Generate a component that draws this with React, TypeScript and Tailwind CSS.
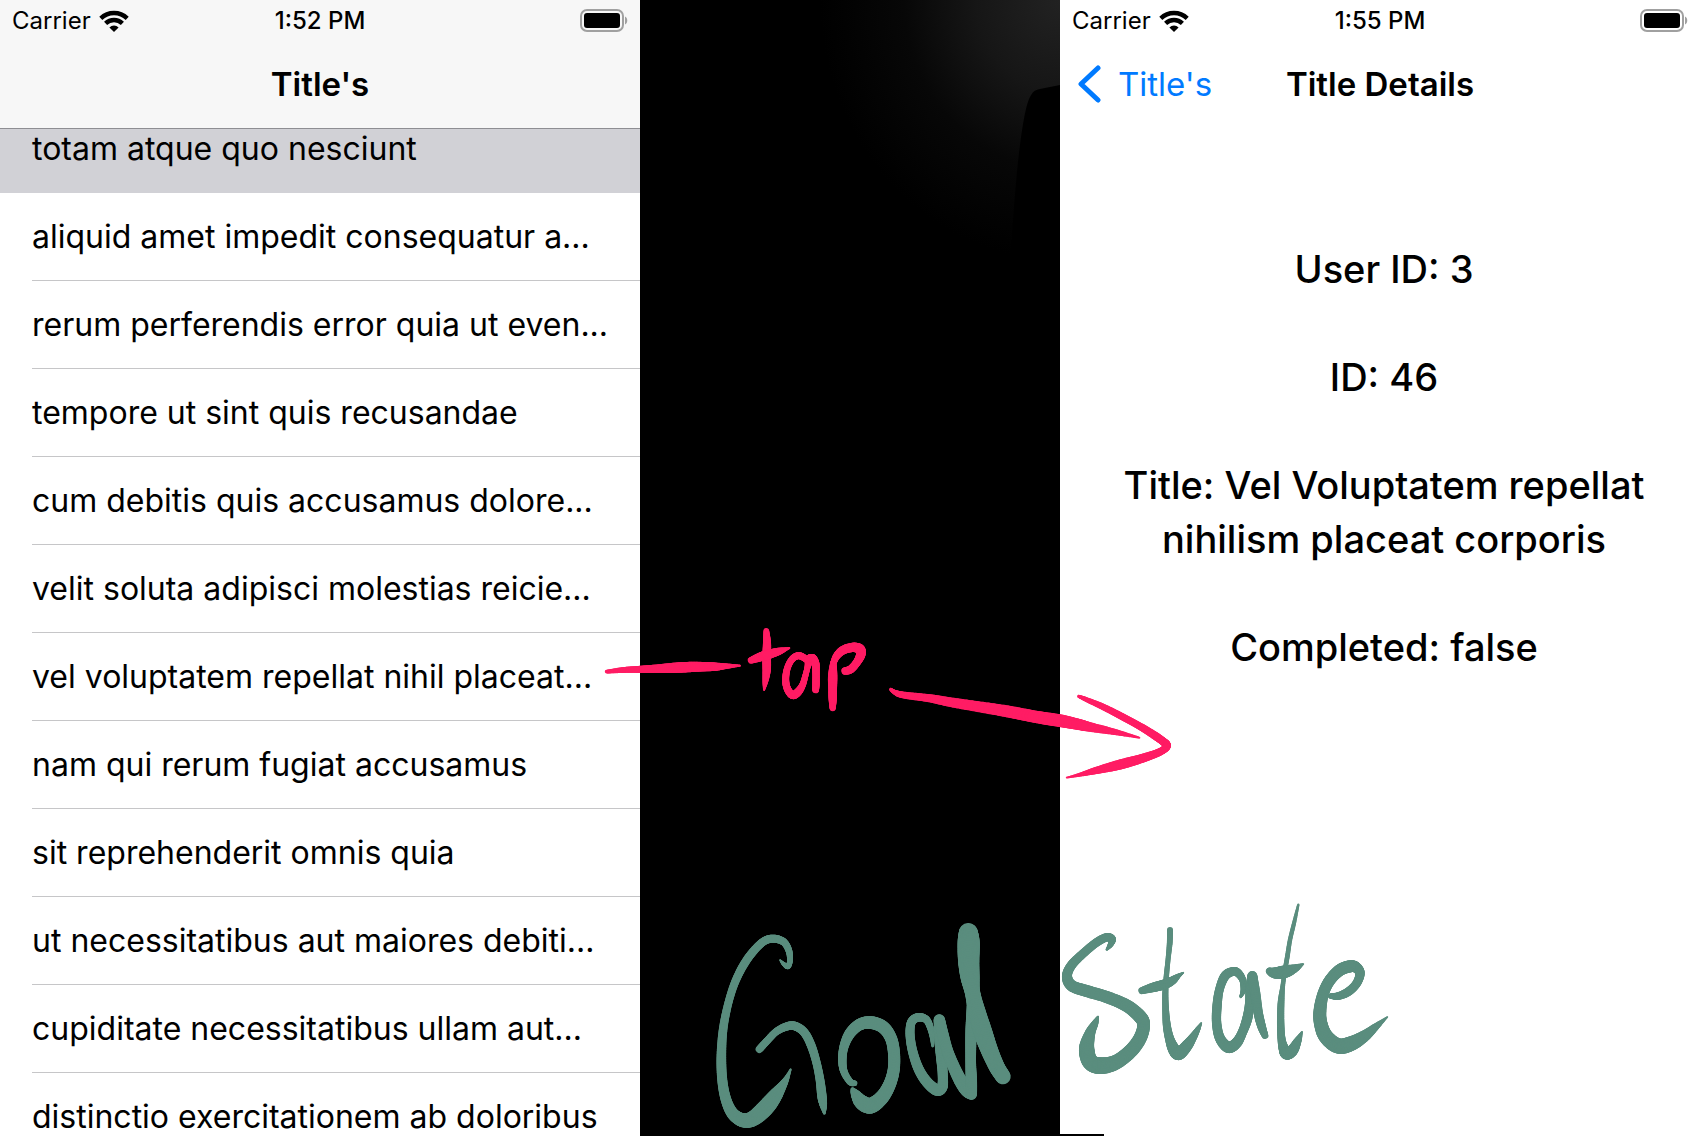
import React from "react";

type Dot = [number, number, number];

const PINK = "#ff1c64";
const GREEN = "#5a8d7e";

/** A pen stroke: each sample is x, y and the width of the nib, in thirds of a pixel. */
function Ink({ dots, color }: { dots: Dot[]; color: string }) {
  const steps = 10;
  const curve: Dot[] = [];
  const at = (i: number) => dots[Math.max(0, Math.min(dots.length - 1, i))];
  for (let i = 0; i < dots.length - 1; i++) {
    const [a, b, c, d] = [at(i - 1), at(i), at(i + 1), at(i + 2)];
    for (let s = 0; s < steps; s++) {
      const t = s / steps;
      curve.push(
        [0, 1, 2].map(
          (k) =>
            0.5 *
            (2 * b[k] +
              (c[k] - a[k]) * t +
              (2 * a[k] - 5 * b[k] + 4 * c[k] - d[k]) * t * t +
              (3 * b[k] - a[k] - 3 * c[k] + d[k]) * t * t * t),
        ) as Dot,
      );
    }
  }
  curve.push(dots[dots.length - 1]);
  return (
    <g stroke={color} strokeLinecap="round">
      {curve.slice(1).map((p, i) => (
        <line key={i} x1={curve[i][0]} y1={curve[i][1]} x2={p[0]} y2={p[1]} strokeWidth={Math.max(3, p[2])} />
      ))}
    </g>
  );
}

const tapStrokes: Dot[][] = [
  [[50,215,11],[100,210,17],[150,208,21],[200,206,25],[260,203,31],[300,201,31],[350,200,28],[380,200,24],[420,198,14],[450,197,6]],
  [[529,92,16],[531,130,24],[530,170,26],[530,210,25],[526,245,17],[522,270,6]],
  [[483,181,19],[510,171,26],[530,165,28],[560,156,24],[580,150,15],[598,144,6]],
  [[650,180,18],[640,172,20],[624,167,21],[606,178,20],[592,205,20],[587,240,21],[593,268,22],[608,285,24],[624,276,24],[638,254,20],[647,224,18],[653,200,18],[658,178,24],[668,175,24],[676,190,24],[678,215,22],[678,250,22],[677,270,20]],
  [[730,188,18],[728,230,28],[728,270,26],[728,300,24],[728,325,18]],
  [[730,190,18],[740,168,22],[760,150,26],[790,142,28],[810,148,30],[812,165,28],[800,188,24],[782,208,24],[765,213,22]],
];

const arrowStrokes: Dot[][] = [
  [[62,88,9],[75,97,14],[100,105,20],[180,115,24],[250,128,29],[400,152,35],[500,171,37],[570,182,38],[620,192,34],[660,201,29],[740,217,18],[808,233,6]],
  [[626,109,9],[650,119,14],[700,141,19],[755,169,21],[810,199,22],[855,227,24],[880,245,24],[890,255,24],[885,266,22],[860,280,23],[810,297,27],[745,315,30],[680,331,22],[630,344,12],[590,353,5]],
];

const goalStrokes: Dot[][] = [
  [[240,180,4],[252,193,12],[264,199,16],[270,180,17],[266,150,20],[250,125,22],[220,116,24],[190,125,24],[155,160,25],[125,205,25],[100,260,24],[80,330,24],[68,400,26],[64,480,29],[68,550,30],[80,605,32],[100,643,36],[130,661,42],[160,655,46],[195,625,50],[222,592,44],[245,560,28],[260,535,16],[272,508,6]],
  [[178,448,22],[200,424,22],[230,394,22],[265,378,25],[290,380,26],[315,400,26],[335,440,26],[350,490,25],[360,540,26],[366,590,28],[370,615,22],[373,640,8]],
  [[464,550,16],[450,545,20],[432,515,22],[427,480,25],[432,440,27],[450,400,32],[480,373,35],[515,368,38],[550,382,38],[573,415,36],[582,460,36],[581,510,36],[568,555,38],[545,593,42],[512,617,47],[485,607,44],[468,585,30],[457,567,10]],
  [[698,438,8],[696,410,14],[690,380,20],[678,358,22],[655,352,26],[635,365,26],[630,400,27],[637,450,28],[655,505,30],[680,545,32],[710,570,34],[727,560,32],[728,520,30],[724,470,32],[720,420,34],[718,360,34]],
  [[718,360,34],[728,400,34],[745,460,34],[775,530,38],[800,570,40],[815,585,28]],
  [[815,583,32],[814,540,34],[812,480,32],[813,400,34],[816,340,34],[820,280,36]],
  [[805,97,56],[806,130,66],[806,180,64],[810,230,58],[818,280,46],[832,340,52],[850,400,56],[868,450,52],[890,500,48],[909,530,46]],
];

const stateStrokes: Dot[][] = [
  [[200,179,6],[212,163,16],[216,147,22],[200,142,25],[170,157,26],[130,190,26],[95,225,28],[81,258,30],[95,287,34],[140,303,36],[200,321,36],[260,347,38],[300,380,40],[311,405,38],[300,445,40],[270,485,42],[225,518,44],[180,527,50],[150,515,48],[140,475,46],[150,430,32],[165,400,20],[174,380,6]],
  [[390,120,18],[389,160,17],[384,210,15],[379,260,16],[376,310,18],[377,360,20],[381,410,24],[390,450,28],[403,480,36],[417,491,38],[440,468,34],[460,440,24],[475,415,14],[484,399,5]],
  [[305,302,20],[340,292,28],[370,284,30],[395,273,26],[415,258,14],[430,248,5]],
  [[602,320,8],[610,300,16],[608,270,20],[595,250,24],[580,244,26],[555,258,28],[538,300,26],[531,350,28],[530,400,28],[540,445,30],[565,472,34],[590,458,32],[608,425,28],[622,385,30],[629,340,28],[634,290,34],[637,258,30]],
  [[637,258,30],[646,310,30],[655,370,28],[665,410,26],[675,437,20]],
  [[775,44,7],[762,100,12],[750,150,13],[742,200,14],[735,240,14],[728,290,14],[723,340,20],[722,400,22],[725,450,24],[733,480,32],[742,490,38],[758,480,34],[772,455,24],[786,426,6]],
  [[687,243,18],[705,249,32],[735,245,38],[765,235,24],[790,222,5]],
  [[872,318,16],[895,318,22],[925,305,26],[950,280,26],[960,250,28],[948,232,32],[930,229,36],[900,240,36],[870,270,34],[850,310,34],[840,360,38],[842,400,40],[858,440,44],[895,468,46],[935,460,44],[975,437,34],[1010,408,20],[1042,381,5]],
];

function Sketch({ strokes, color, x, y }: { strokes: Dot[][]; color: string; x: number; y: number }) {
  return (
    <g transform={`translate(${x} ${y}) scale(${1 / 3})`}>
      {strokes.map((dots, i) => (
        <Ink key={i} dots={dots} color={color} />
      ))}
    </g>
  );
}

function Wifi() {
  return (
    <svg viewBox="0 0 30 22" className="h-[22px] w-[30px]" fill="none" stroke="black" strokeWidth="4.4" aria-hidden="true">
      <path d="M1.8 8.4a19 19 0 0 1 26.4 0" />
      <path d="M6.6 13.4a12 12 0 0 1 16.8 0" />
      <path d="M15 22l-4.6-4.6a6.5 6.5 0 0 1 9.2 0z" fill="black" stroke="none" />
    </svg>
  );
}

function Battery() {
  return (
    <svg viewBox="0 0 48 23" className="h-[23px] w-12" aria-label="Battery full" role="img">
      <rect x="1" y="1" width="42" height="21" rx="6" fill="none" stroke="#a0a0a0" strokeWidth="2" />
      <rect x="4" y="4" width="36" height="15" rx="3" fill="black" />
      <path d="M45 7.5c3 1.2 3 6.8 0 8z" fill="#a0a0a0" />
    </svg>
  );
}

function StatusBar({ time }: { time: string }) {
  return (
    <div className="grid h-10 grid-cols-[1fr_auto_1fr] items-center px-3 text-[24px]">
      <div className="flex items-center gap-2 pt-0.5">
        <span>Carrier</span>
        <Wifi />
      </div>
      <span className="pt-0.5 font-medium">{time}</span>
      <div className="flex justify-end">
        <Battery />
      </div>
    </div>
  );
}

const rows = [
  "totam atque quo nesciunt",
  "aliquid amet impedit consequatur a...",
  "rerum perferendis error quia ut even...",
  "tempore ut sint quis recusandae",
  "cum debitis quis accusamus dolore...",
  "velit soluta adipisci molestias reicie...",
  "vel voluptatem repellat nihil placeat...",
  "nam qui rerum fugiat accusamus",
  "sit reprehenderit omnis quia",
  "ut necessitatibus aut maiores debiti...",
  "cupiditate necessitatibus ullam aut...",
  "distinctio exercitationem ab doloribus",
];

function TitleList() {
  return (
    <section className="min-w-0 overflow-hidden bg-white">
      <header className="relative z-10 h-[129px] border-b border-[#8e8e93] bg-[#f7f7f7]">
        <StatusBar time="1:52 PM" />
        <h1 className="flex h-[88px] items-center justify-center pt-0.5 text-[33px] font-semibold">Title's</h1>
      </header>
      <ul className="-mt-6">
        {rows.map((row, i) => (
          <li key={row} className={i === 0 ? "bg-[#d1d1d6] pl-8" : "pl-8"}>
            <button
              type="button"
              className={
                "block h-[88px] w-full border-b text-left text-[32px] whitespace-nowrap " +
                (i === 0 ? "border-transparent" : "border-[#c6c6c8]")
              }
            >
              {row}
            </button>
          </li>
        ))}
      </ul>
    </section>
  );
}

function TitleDetails() {
  return (
    <section className="min-w-0 overflow-hidden bg-white">
      <div className="-mr-1">
        <StatusBar time="1:55 PM" />
        <header className="grid h-[88px] grid-cols-[1fr_auto_1fr] items-center pt-0.5 text-[33px]">
          <a href="#titles" className="flex items-center gap-4 pl-4 text-[#007aff]">
            <svg viewBox="0 0 26 40" className="h-10 w-[26px]" fill="none" stroke="currentColor" strokeWidth="5" strokeLinecap="round" strokeLinejoin="round" aria-hidden="true">
              <path d="M22 3L5 19l17 16" />
            </svg>
            Title's
          </a>
          <h1 className="font-semibold">Title Details</h1>
        </header>
      </div>
      <div className="grid gap-[54px] pt-[114px] pl-3 text-center text-[38px] leading-[54px] font-medium">
        <p>User ID: 3</p>
        <p>ID: 46</p>
        <p>
          Title: Vel Voluptatem repellat
          <br />
          nihilism placeat corporis
        </p>
        <p>Completed: false</p>
      </div>
    </section>
  );
}

export default function App() {
  return (
    <main className="relative grid h-screen grid-cols-[640fr_420fr_636fr] overflow-hidden bg-black font-['Inter',sans-serif] text-black">
      <TitleList />
      <div className="bg-[radial-gradient(ellipse_240px_260px_at_100%_0%,#222222,#161616_35%,#070707_65%,#000000)]" />
      <TitleDetails />
      <svg
        viewBox="0 0 1696 1136"
        className="pointer-events-none absolute inset-0 size-full"
        role="img"
        aria-label="Tap a title to reach the goal state"
      >
        <path d="M1060 85l-20 4c-8 1-11 8-14 20-7 30-12 90-15 150h49z" fill="black" />
        <path d="M1060 1134h44v2h-44z" fill="black" />
        <Sketch strokes={tapStrokes} color={PINK} x={590} y={600} />
        <Sketch strokes={arrowStrokes} color={PINK} x={870} y={660} />
        <Sketch strokes={goalStrokes} color={GREEN} x={700} y={900} />
        <Sketch strokes={stateStrokes} color={GREEN} x={1040} y={890} />
      </svg>
    </main>
  );
}
